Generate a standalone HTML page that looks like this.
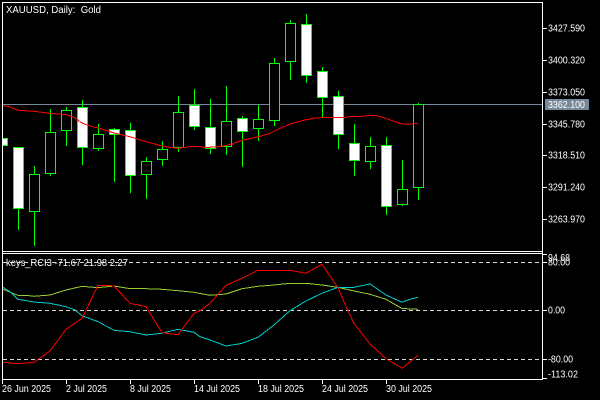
<!DOCTYPE html>
<html><head><meta charset="utf-8"><style>
html,body{margin:0;padding:0;background:#000;width:600px;height:400px;overflow:hidden}
svg{display:block}
text{font-family:"Liberation Sans",sans-serif;font-size:10px;fill:#fff;white-space:pre}
</style></head><body>
<svg width="600" height="400" viewBox="0 0 600 400" xmlns="http://www.w3.org/2000/svg">
<rect width="600" height="400" fill="#000"/>
<g shape-rendering="crispEdges">
<path d="M3 104.5H542" stroke="#778899" fill="none"/>
<g stroke="#00ff00" fill="none">
<path d="M18.5 209V230M34.5 166V246M50.5 109V176M66.5 107V146M82.5 100V165M98.5 124V151M114.5 128V182M130.5 123V193M146.5 157V199M162.5 141V166M178.5 96V152M194.5 89V130M210.5 99V154M226.5 86V155M242.5 116V167M258.5 105V141M274.5 58V126M290.5 20V80M306.5 14V83M322.5 67V117M338.5 91V149M354.5 124V176M370.5 137V169M386.5 137V215M402.5 160V206M418.5 103V200"/>
<g fill="#000">
<rect x="29.5" y="174.5" width="10" height="37"/><rect x="45.5" y="132.5" width="10" height="41"/><rect x="61.5" y="110.5" width="10" height="20"/><rect x="93.5" y="134.5" width="10" height="14"/><rect x="141.5" y="161.5" width="10" height="13"/><rect x="157.5" y="149.5" width="10" height="10"/><rect x="173.5" y="112.5" width="10" height="35"/><rect x="221.5" y="121.5" width="10" height="25"/><rect x="253.5" y="119.5" width="10" height="9"/><rect x="269.5" y="63.5" width="10" height="57"/><rect x="285.5" y="23.5" width="10" height="38"/><rect x="365.5" y="146.5" width="10" height="15"/><rect x="397.5" y="189.5" width="10" height="15"/><rect x="413.5" y="104.5" width="10" height="83"/>
</g>
<g fill="#fff">
<rect x="2.5" y="138.5" width="5" height="7"/><rect x="13.5" y="147.5" width="10" height="61"/><rect x="77.5" y="107.5" width="10" height="40"/><rect x="109.5" y="129.5" width="10" height="5"/><rect x="125.5" y="130.5" width="10" height="45"/><rect x="189.5" y="105.5" width="10" height="21"/><rect x="205.5" y="127.5" width="10" height="21"/><rect x="237.5" y="118.5" width="10" height="13"/><rect x="301.5" y="24.5" width="10" height="51"/><rect x="317.5" y="71.5" width="10" height="26"/><rect x="333.5" y="96.5" width="10" height="38"/><rect x="349.5" y="143.5" width="10" height="17"/><rect x="381.5" y="145.5" width="10" height="61"/>
</g>
</g>
<polyline fill="none" stroke="#ff0000" points="3,105.5 10,107 18,110.3 34,111.3 50,113.3 66,114.6 70,116 74,117.3 82,123 90,126 98,128 105,130 114,133 130,136.7 146,141.7 162,146 170,147.3 178,148.3 190,146.7 200,146.3 205,147.5 215,147 225,145.7 232,144 243,140 258,137 270,133.3 278,129.3 290,124 305,120 315,118 330,117.3 345,117.3 350,116.7 362,116.3 372,115.3 376,115.6 385,118 395,121.7 402,124 410,124 418,123.3"/>
<g stroke="#d8d8d8" stroke-dasharray="4 3" fill="none">
<path d="M3 262.5H542M3 310.5H542M3 359.5H542"/>
</g>
<polyline fill="none" stroke="#9acd32" points="3,289.3 18,295.3 26,295.3 34,296.3 50,295 66,290 82,286.3 98,287.7 114,286 130,288.7 146,288.7 162,289.3 178,290.7 194,292.3 210,295.3 226,294 242,288.7 258,286.3 274,285 290,283.3 306,283.3 322,285 338,287.3 354,291 370,294.3 386,299.3 402,308.5 418,309.3"/>
<polyline fill="none" stroke="#00ced1" points="3,287.3 10,291.7 18,299.3 26,300.7 34,302 50,303.3 66,306.7 75,310 82,315.7 98,321.7 114,330.3 130,331.7 146,335 162,333.3 178,329.3 194,332.3 200,336.7 210,340 226,346 242,343.3 258,337.3 274,325 290,310.7 306,301 322,293.3 338,287.3 354,287.3 370,284 386,295 402,302.3 410,299.3 418,297.3"/>
<polyline fill="none" stroke="#ff0000" points="3,362.3 18,363.7 34,362.3 50,351 66,329.3 82,318.3 98,285.3 108,285.3 114,286 130,303.3 146,306.7 162,332.7 178,334.7 194,313.3 200,310.7 210,303.3 226,285.3 242,278.3 258,270.3 290,270.3 306,273.3 322,264.3 338,287.7 346,306.7 354,323.3 370,344 386,358.7 402,368.3 418,355.3"/>
<g stroke="#fff" fill="none">
<path d="M2.5 2V380M2 2.5H543M542.5 2V380M2 251.5H543M2 253.5H543M2 379.5H543"/>
<path d="M543 28.5H547M543 60.5H547M543 92.5H547M543 124.5H547M543 155.5H547M543 187.5H547M543 219.5H547"/>
<path d="M543 254.5H547M543 262.5H547M543 310.5H547M543 359.5H547M543 378.5H547"/>
<path d="M2.5 380V384M66.5 380V384M130.5 380V384M194.5 380V384M258.5 380V384M322.5 380V384M386.5 380V384"/>
</g>
<rect x="545" y="99" width="44" height="11" fill="#778899"/>
</g>
<text x="6" y="13" textLength="95" lengthAdjust="spacingAndGlyphs">XAUUSD, Daily:  Gold</text>
<text x="6" y="266" textLength="122" lengthAdjust="spacingAndGlyphs">keys_RCI3 -71.67 21.98 2.27</text>
<text x="548" y="31.5" textLength="37" lengthAdjust="spacingAndGlyphs">3427.590</text>
<text x="548" y="63.5" textLength="37" lengthAdjust="spacingAndGlyphs">3400.320</text>
<text x="548" y="95.5" textLength="37" lengthAdjust="spacingAndGlyphs">3373.050</text>
<text x="548" y="108" textLength="37" lengthAdjust="spacingAndGlyphs">3362.100</text>
<text x="548" y="127.5" textLength="37" lengthAdjust="spacingAndGlyphs">3345.780</text>
<text x="548" y="158.5" textLength="37" lengthAdjust="spacingAndGlyphs">3318.510</text>
<text x="548" y="190.5" textLength="37" lengthAdjust="spacingAndGlyphs">3291.240</text>
<text x="548" y="222.5" textLength="37" lengthAdjust="spacingAndGlyphs">3263.970</text>
<text x="548" y="261" textLength="22" lengthAdjust="spacingAndGlyphs">94.68</text>
<text x="548" y="265.5" textLength="22" lengthAdjust="spacingAndGlyphs">80.00</text>
<text x="548" y="313.5" textLength="17" lengthAdjust="spacingAndGlyphs">0.00</text>
<text x="548" y="362.5" textLength="25" lengthAdjust="spacingAndGlyphs">-80.00</text>
<text x="548" y="377.5" textLength="30" lengthAdjust="spacingAndGlyphs">-113.02</text>
<text x="2" y="392" textLength="49" lengthAdjust="spacingAndGlyphs">26 Jun 2025</text>
<text x="66" y="392" textLength="41" lengthAdjust="spacingAndGlyphs">2 Jul 2025</text>
<text x="130" y="392" textLength="41" lengthAdjust="spacingAndGlyphs">8 Jul 2025</text>
<text x="194" y="392" textLength="46" lengthAdjust="spacingAndGlyphs">14 Jul 2025</text>
<text x="258" y="392" textLength="46" lengthAdjust="spacingAndGlyphs">18 Jul 2025</text>
<text x="322" y="392" textLength="46" lengthAdjust="spacingAndGlyphs">24 Jul 2025</text>
<text x="386" y="392" textLength="46" lengthAdjust="spacingAndGlyphs">30 Jul 2025</text>
</svg>
</body></html>
